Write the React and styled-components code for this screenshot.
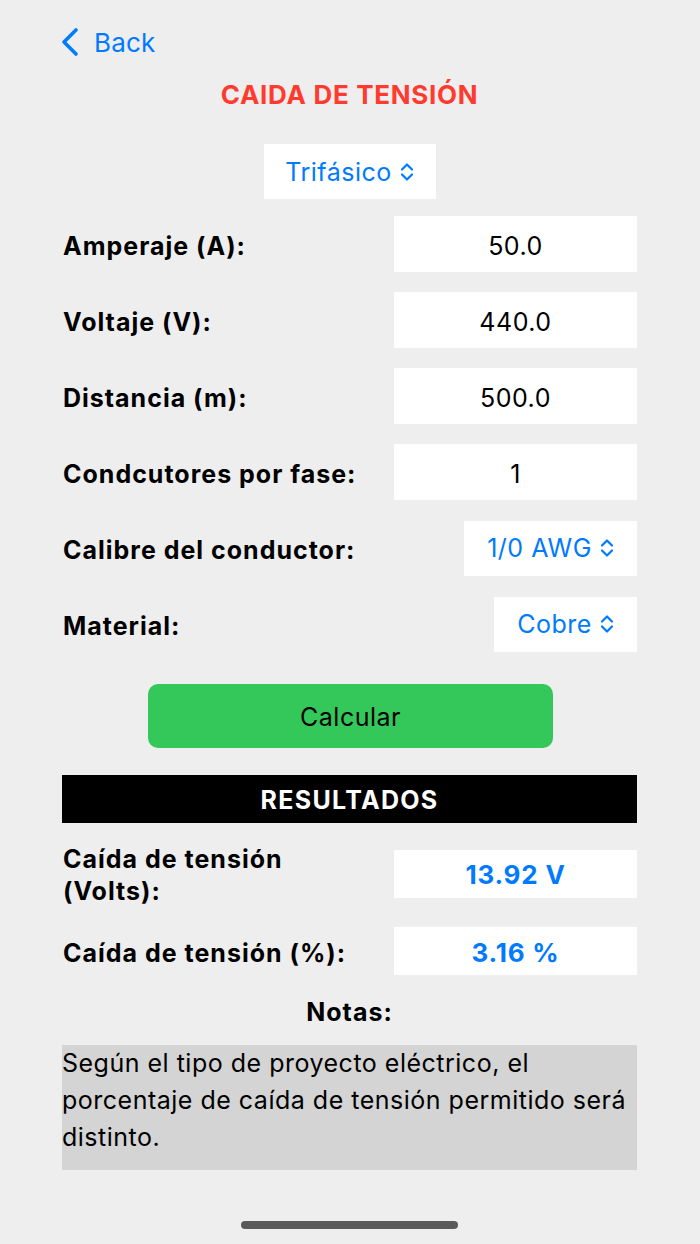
import React from "react";
import styled, { createGlobalStyle } from "styled-components";

const BLUE = "#007aff";

function UpDown() {
  return (
    <Chevrons width="14" height="20" viewBox="0 0 14 20" fill="none">
      <path d="M2 7.5 L7 2.5 L12 7.5" />
      <path d="M2 12.5 L7 17.5 L12 12.5" />
    </Chevrons>
  );
}

function App() {
  const inputs = [
    ["Amperaje (A):", "50.0"],
    ["Voltaje (V):", "440.0"],
    ["Distancia (m):", "500.0"],
    ["Condcutores por fase:", "1"],
  ];

  return (
    <Page>
      <GlobalResets />
      <Nav>
        <BackLink>
          <svg width="20" height="30" viewBox="0 0 20 30" fill="none">
            <path
              d="M16 3 L4 15 L16 27"
              stroke={BLUE}
              strokeWidth="3.6"
              strokeLinecap="round"
              strokeLinejoin="round"
            />
          </svg>
          <span>Back</span>
        </BackLink>
      </Nav>
      <Title>CAIDA DE TENSIÓN</Title>

      <PickerRow>
        <Picker $w={172}>
          Trifásico <UpDown />
        </Picker>
      </PickerRow>

      <Form>
        {inputs.map(([label, value]) => (
          <Row key={label}>
            <Label>{label}</Label>
            <Field>{value}</Field>
          </Row>
        ))}
        <Row>
          <Label>Calibre del conductor:</Label>
          <Picker $w={173}>
            1/0 AWG <UpDown />
          </Picker>
        </Row>
        <Row>
          <Label>Material:</Label>
          <Picker $w={143}>
            Cobre <UpDown />
          </Picker>
        </Row>
      </Form>

      <ButtonRow>
        <CalcButton>Calcular</CalcButton>
      </ButtonRow>

      <ResultsBar>RESULTADOS</ResultsBar>

      <ResultRow $top={17}>
        <Label>
          Caída de tensión
          <br />
          (Volts):
        </Label>
        <ResultValue>13.92 V</ResultValue>
      </ResultRow>
      <ResultRow $top={20}>
        <Label>Caída de tensión (%):</Label>
        <ResultValue>3.16 %</ResultValue>
      </ResultRow>

      <NotesTitle>Notas:</NotesTitle>
      <Notes>
        Según el tipo de proyecto eléctrico, el porcentaje de caída de tensión
        permitido será distinto.
      </Notes>

      <HomeBar />
    </Page>
  );
}

const GlobalResets = createGlobalStyle`
  * {
    box-sizing: border-box;
    margin: 0;
    padding: 0;
  }
  body {
    background: #eeeeee;
    font-family: Inter, "Liberation Sans", sans-serif;
    color: #000;
    letter-spacing: 0.5px;
  }
`;

const Page = styled.div`
  width: 700px;
  height: 1244px;
  padding: 0 63px 0 62px;
  display: flex;
  flex-direction: column;
  background: #eeeeee;
  overflow: hidden;
`;

const Nav = styled.div`
  height: 80px;
  padding-top: 4px;
  display: flex;
  align-items: center;
`;

const BackLink = styled.div`
  display: flex;
  align-items: center;
  gap: 14px;
  color: ${BLUE};
  font-size: 26px;
  letter-spacing: 0.2px;
  margin-left: -2px;

  & > svg {
    margin-top: -1px;
  }
`;

const Title = styled.h1`
  height: 30px;
  line-height: 30px;
  text-align: center;
  color: #ff3b30;
  font-size: 26px;
  font-weight: 700;
  letter-spacing: 0.7px;
`;

const PickerRow = styled.div`
  margin-top: 34px;
  display: flex;
  justify-content: center;
`;

const Chevrons = styled.svg`
  flex: none;
  & path {
    stroke: ${BLUE};
    stroke-width: 2.2;
    stroke-linecap: round;
    stroke-linejoin: round;
  }
`;

const Picker = styled.div`
  width: ${(p) => p.$w}px;
  height: 55px;
  background: #fff;
  color: ${BLUE};
  font-size: 25px;
  display: flex;
  align-items: center;
  justify-content: center;
  gap: 8px;
  white-space: nowrap;
`;

const Form = styled.div`
  margin-top: 17px;
  display: flex;
  flex-direction: column;
  gap: 20px;
`;

const Row = styled.div`
  height: 56px;
  display: flex;
  align-items: center;
  justify-content: space-between;
`;

const Label = styled.div`
  font-size: 25px;
  font-weight: 700;
  line-height: 32px;
  letter-spacing: 1px;
  margin-left: 1px;
  padding-top: 3px;
`;

const Field = styled.div`
  width: 243px;
  height: 56px;
  background: #fff;
  font-size: 25px;
  display: flex;
  align-items: center;
  justify-content: center;
  padding-top: 3px;
`;

const ButtonRow = styled.div`
  margin-top: 32px;
  display: flex;
  justify-content: center;
`;

const CalcButton = styled.button`
  width: 405px;
  height: 64px;
  border: none;
  border-radius: 10px;
  background: #34c759;
  color: #000;
  font-family: inherit;
  font-size: 25px;
  letter-spacing: 0.5px;
  margin-left: 2px;
  padding-top: 2px;
`;

const ResultsBar = styled.div`
  margin-top: 27px;
  height: 48px;
  background: #000;
  color: #fff;
  font-size: 25px;
  font-weight: 700;
  letter-spacing: 1.3px;
  display: flex;
  align-items: center;
  justify-content: center;
  padding-top: 2px;
`;

const ResultRow = styled.div`
  margin-top: ${(p) => p.$top}px;
  display: flex;
  align-items: center;
  justify-content: space-between;
`;

const ResultValue = styled.div`
  width: 243px;
  height: 48px;
  background: #fff;
  color: ${BLUE};
  font-size: 26px;
  font-weight: 700;
  letter-spacing: 0.8px;
  display: flex;
  align-items: center;
  justify-content: center;
  padding-top: 2px;
`;

const NotesTitle = styled.div`
  margin-top: 22px;
  height: 30px;
  line-height: 30px;
  text-align: center;
  font-size: 25px;
  font-weight: 700;
  letter-spacing: 1px;
`;

const Notes = styled.p`
  margin-top: 18px;
  height: 125px;
  background: #d4d4d4;
  font-size: 25px;
  line-height: 37px;
  letter-spacing: 0.5px;
`;

const HomeBar = styled.div`
  margin: 51px auto 0;
  width: 217px;
  height: 8px;
  border-radius: 4px;
  background: #5a5a5a;
  flex: none;
`;

export default App;
